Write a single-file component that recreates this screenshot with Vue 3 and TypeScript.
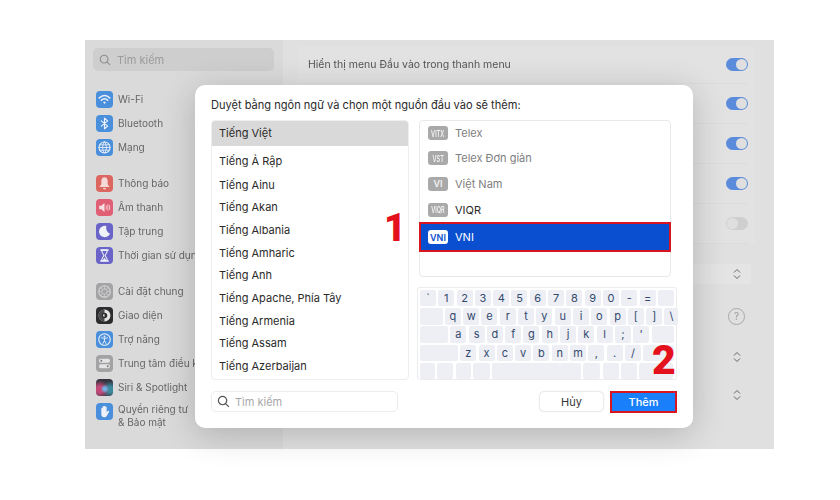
<script setup lang="ts">
interface Glyph { d: string; fill?: boolean; sw?: number; color?: string }
interface NavItem { label: string; bg: string; glyphs: Glyph[]; multi?: boolean }

const wifi: Glyph[] = [
  { d: 'M3 6.6C6 3.6 10 3.6 13 6.6', sw: 1.5 },
  { d: 'M5 8.7C6.8 7 9.2 7 11 8.7', sw: 1.5 },
  { d: 'M8 12.2 6.7 10.6C7.5 10 8.5 10 9.3 10.6Z', fill: true }
]
const navGroups: NavItem[][] = [
  [
    { label: 'Wi-Fi', bg: '#4a8fdc', glyphs: wifi },
    { label: 'Bluetooth', bg: '#4a8fdc', glyphs: [{ d: 'M5 5.5 11 10.5 8 13V3L11 5.5 5 10.5', sw: 1.1 }] },
    { label: 'Mạng', bg: '#4a8fdc', glyphs: [
      { d: 'M8 2.8A5.2 5.2 0 1 0 8 13.2 5.2 5.2 0 1 0 8 2.8Z', sw: 1 },
      { d: 'M8 2.8C5.6 5.6 5.6 10.4 8 13.2 10.4 10.4 10.4 5.6 8 2.8Z', sw: .8 },
      { d: 'M2.8 8H13.2M3.6 5.5H12.4M3.6 10.5H12.4', sw: .8 }
    ] }
  ],
  [
    { label: 'Thông báo', bg: '#dc6660', glyphs: [{ d: 'M8 2.2C5.8 2.2 5 4 5 5.8V8.8L3.2 11.2H12.8L11 8.8V5.8C11 4 10.2 2.2 8 2.2ZM6.5 12.2H9.5C9.2 14 6.8 14 6.5 12.2Z', fill: true, color: '#f4d9d6' }] },
    { label: 'Âm thanh', bg: '#e05f74', glyphs: [
      { d: 'M3 6.3H5L8 3.8V12.2L5 9.7H3Z', fill: true, color: '#f6dfe2' },
      { d: 'M9.6 6.4V9.6M11.2 5.2V10.8M12.8 6.2V9.8', sw: .9, color: '#f2c6cd' }
    ] },
    { label: 'Tập trung', bg: '#6a64c8', glyphs: [{ d: 'M9.8 2.8A5.4 5.4 0 1 0 13.2 10.2 6 6 0 0 1 9.8 2.8Z', fill: true }] },
    { label: 'Thời gian sử dụng', bg: '#6a64c8', glyphs: [
      { d: 'M4.5 2.8H11.5M4.5 13.2H11.5', sw: 1.3 },
      { d: 'M5.4 3.2H10.6C10.6 5.6 8.8 6.8 8.6 8 8.8 9.2 10.6 10.4 10.6 12.8H5.4C5.4 10.4 7.2 9.2 7.4 8 7.2 6.8 5.4 5.6 5.4 3.2Z', sw: 1 },
      { d: 'M6.2 12.6H9.8L8 10.2Z', fill: true }
    ] }
  ],
  [
    { label: 'Cài đặt chung', bg: '#a3a3a5', glyphs: [
      { d: 'M8 2.6A5.4 5.4 0 1 0 8 13.4 5.4 5.4 0 1 0 8 2.6Z', sw: 1.2, color: '#cfcfd0' },
      { d: 'M8 5.4A2.6 2.6 0 1 0 8 10.6 2.6 2.6 0 1 0 8 5.4Z', sw: .9, color: '#cfcfd0' },
      { d: 'M8 2.8V5.4M8 10.6V13.2M2.8 8H5.4M10.6 8H13.2M4.3 4.3 6.2 6.2M9.8 9.8 11.7 11.7M11.7 4.3 9.8 6.2M6.2 9.8 4.3 11.7', sw: .6, color: '#cfcfd0' }
    ] },
    { label: 'Giao diện', bg: '#2c2c2e', glyphs: [
      { d: 'M8 2.4A5.6 5.6 0 1 0 8 13.6 5.6 5.6 0 1 0 8 2.4Z', fill: true, color: '#e4e4e4' },
      { d: 'M8 2.4A5.6 5.6 0 0 0 8 13.6Z', fill: true, color: '#4a4a4c' },
      { d: 'M8 5.4A2.6 2.6 0 1 0 8 10.6 2.6 2.6 0 1 0 8 5.4Z', fill: true, color: '#2c2c2e' },
      { d: 'M8 6.6A1.4 1.4 0 0 0 8 9.4Z', fill: true, color: '#e4e4e4' }
    ] },
    { label: 'Trợ năng', bg: '#4a8fdc', glyphs: [
      { d: 'M8 2.6A5.4 5.4 0 1 0 8 13.4 5.4 5.4 0 1 0 8 2.6Z', sw: 1 },
      { d: 'M5.2 6.4 8 7 10.8 6.4M8 7V9.2L6.6 11.6M8 9.2 9.4 11.6', sw: .9 },
      { d: 'M8 4.3A.9.9 0 1 0 8 6.1 .9.9 0 1 0 8 4.3Z', fill: true }
    ] },
    { label: 'Trung tâm điều khiển', bg: '#a3a3a5', glyphs: [
      { d: 'M4.6 3.6H11.4A1.8 1.8 0 0 1 11.4 7.2H4.6A1.8 1.8 0 0 1 4.6 3.6Z', fill: true, color: '#e4e4e4' },
      { d: 'M4.6 8.8H11.4A1.8 1.8 0 0 1 11.4 12.4H4.6A1.8 1.8 0 0 1 4.6 8.8Z', fill: true, color: '#e4e4e4' },
      { d: 'M5 4.5A.9.9 0 1 0 5 6.3 .9.9 0 1 0 5 4.5ZM11 9.7A.9.9 0 1 0 11 11.5 .9.9 0 1 0 11 9.7Z', fill: true, color: '#77777a' }
    ] },
    { label: 'Siri & Spotlight', bg: 'radial-gradient(circle at 52% 58%, #6fb2e6 0 10%, transparent 32%), radial-gradient(circle at 22% 62%, #c24a78 0 20%, transparent 55%), radial-gradient(circle at 82% 62%, #3c8a9e 0 16%, transparent 50%), #35333f', glyphs: [] },
    { label: 'Quyền riêng tư\n& Bảo mật', bg: '#4a8fdc', multi: true, glyphs: [
      { d: 'M5 8V5.2C5 4.2 6.2 4.2 6.2 5.2V7.4 3.6C6.2 2.6 7.5 2.6 7.5 3.6V7.4 3.3C7.5 2.3 8.8 2.3 8.8 3.3V7.4 4C8.8 3 10 3 10 4V8.8L11 7.6C11.8 6.8 12.7 7.5 12.2 8.4L10.4 11.8C9.8 13 8.8 13.5 7.7 13.5 6 13.5 5 12.2 5 10.6Z', fill: true }
    ] }
  ]
]

interface SourceRow { badge: string; label: string; dim?: boolean; active?: boolean; narrow?: boolean }
const languages = ['Tiếng Ainu', 'Tiếng Akan', 'Tiếng Albania', 'Tiếng Amharic', 'Tiếng Anh', 'Tiếng Apache, Phía Tây', 'Tiếng Armenia', 'Tiếng Assam', 'Tiếng Azerbaijan']
const sources: SourceRow[] = [
  { badge: 'VITX', label: 'Telex', dim: true, narrow: true },
  { badge: 'VST', label: 'Telex Đơn giản', dim: true, narrow: true },
  { badge: 'VI', label: 'Việt Nam', dim: true },
  { badge: 'VIQR', label: 'VIQR', narrow: true },
  { badge: 'VNI', label: 'VNI', active: true }
]

interface Key { t: string; w: number }
const chars = (s: string, w = 16): Key[] => s.split('').map(t => ({ t, w }))
const keyRows: Key[][] = [
  [...chars('`1234567890-='), { t: '', w: 16 }],
  [{ t: '', w: 22.6 }, ...chars('qwertyuiop[]'), { t: '\\', w: 14 }],
  [{ t: '', w: 28 }, ...chars("asdfghjkl;'"), { t: '', w: 22.7 }],
  [{ t: '', w: 38 }, ...chars('zxcvbnm,./'), { t: '', w: 31 }],
  [15, 16, 15, 17, 89, 17, 16, 16, 34].map(w => ({ t: '', w }))
]
const toggles = [true, true, true, true, false]
</script>

<template>
  <main class="page">
    <div class="window">
      <aside class="sidebar">
        <div class="side-search">
          <svg class="lens" viewBox="0 0 14 14"><path d="M6 1.5A4.5 4.5 0 1 0 6 10.5 4.5 4.5 0 1 0 6 1.5ZM9.3 9.3 12.8 12.8" /></svg>
          <span>Tìm kiếm</span>
        </div>
        <nav class="nav">
          <ul v-for="(group, gi) in navGroups" :key="gi" class="nav-group">
            <li v-for="item in group" :key="item.label" class="nav-item" :class="{ multi: item.multi }">
              <span class="nav-icon" :style="{ background: item.bg }">
                <svg viewBox="0 0 16 16">
                  <path
                    v-for="(g, i) in item.glyphs"
                    :key="i"
                    :d="g.d"
                    :fill="g.fill ? (g.color ?? '#eef2f8') : 'none'"
                    :stroke="g.fill ? 'none' : (g.color ?? '#eef2f8')"
                    :stroke-width="g.sw ?? 1"
                    stroke-linecap="round"
                    stroke-linejoin="round"
                  />
                </svg>
              </span>
              <span class="nav-label">{{ item.label }}</span>
            </li>
          </ul>
        </nav>
      </aside>

      <section class="content">
        <div class="toggle-group">
          <div v-for="(on, i) in toggles" :key="i" class="row">
            <span v-if="i === 0" class="row-label">Hiển thị menu Đầu vào trong thanh menu</span>
            <span class="toggle" :class="{ on }"><i /></span>
          </div>
        </div>
        <div class="ctl-row select-row">
          <svg class="updown" viewBox="0 0 8 12"><path d="M1 4.5 4 1.5 7 4.5M1 7.5 4 10.5 7 7.5" /></svg>
        </div>
        <div class="ctl-row help-row"><span class="help">?</span></div>
        <div class="ctl-row chevron-a">
          <svg class="updown" viewBox="0 0 8 12"><path d="M1 4.5 4 1.5 7 4.5M1 7.5 4 10.5 7 7.5" /></svg>
        </div>
        <div class="ctl-row chevron-b">
          <svg class="updown" viewBox="0 0 8 12"><path d="M1 4.5 4 1.5 7 4.5M1 7.5 4 10.5 7 7.5" /></svg>
        </div>
      </section>

      <div class="dialog">
        <h1 class="title">Duyệt bằng ngôn ngữ và chọn một nguồn đầu vào sẽ thêm:</h1>
        <div class="columns">
          <ul class="lang-list">
            <li class="lang selected">Tiếng Việt</li>
            <li class="lang first">Tiếng Ả Rập</li>
            <li v-for="l in languages" :key="l" class="lang">{{ l }}</li>
          </ul>
          <div class="right">
            <ul class="source-list">
              <li v-for="s in sources" :key="s.label" class="source" :class="{ dim: s.dim, active: s.active }">
                <span class="badge" :class="{ narrow: s.narrow }"><b>{{ s.badge }}</b></span>
                <span>{{ s.label }}</span>
              </li>
            </ul>
            <div class="keyboard">
              <div v-for="(row, ri) in keyRows" :key="ri" class="key-row">
                <span v-for="(k, ki) in row" :key="ki" class="key" :style="{ width: k.w + 'px' }">{{ k.t }}</span>
              </div>
            </div>
          </div>
        </div>
        <footer class="footer">
          <div class="dlg-search">
            <svg class="lens dark" viewBox="0 0 14 14"><path d="M6 1.5A4.5 4.5 0 1 0 6 10.5 4.5 4.5 0 1 0 6 1.5ZM9.3 9.3 12.8 12.8" /></svg>
            <span>Tìm kiếm</span>
          </div>
          <div class="buttons">
            <button class="btn cancel" type="button">Hủy</button>
            <button class="btn add" type="button">Thêm</button>
          </div>
        </footer>
        <span class="mark mark-1">1</span>
        <span class="mark mark-2">2</span>
      </div>
    </div>
  </main>
</template>

<style scoped>
.page {
  width: 840px;
  height: 500px;
  box-sizing: border-box;
  padding: 40px 66px 51px 85px;
  background: #fff;
  font-family: Inter, "Noto Sans", sans-serif;
  overflow: hidden;
}
.window {
  position: relative;
  display: flex;
  height: 409px;
  background: #dedede;
}
ul { list-style: none; margin: 0; padding: 0; }

.sidebar {
  width: 198px;
  flex: none;
  box-sizing: border-box;
  padding: 8px 9px 0 8px;
  background: #dbdadb;
  filter: blur(.35px);
}
.side-search {
  display: flex;
  align-items: center;
  gap: 6px;
  height: 23px;
  padding-left: 6px;
  border-radius: 5px;
  background: #cfcecf;
  color: #9c9c9c;
  font-size: 11px;
}
.lens { width: 12px; height: 12px; flex: none; fill: none; stroke: #8f8f8f; stroke-width: 1.3; }
.lens.dark { stroke: #555; width: 13px; height: 13px; }
.nav { margin-top: 16px; padding-left: 3px; display: flex; flex-direction: column; gap: 12px; }
.nav-item {
  display: flex;
  align-items: center;
  gap: 5px;
  height: 24px;
  color: #666;
  font-size: 10px;
  white-space: pre;
}
.nav-item.multi { align-items: flex-start; height: 38px; padding-top: 4px; box-sizing: border-box; line-height: 13px; }
.nav-icon { width: 17px; height: 17px; border-radius: 4px; flex: none; display: block; }
.nav-icon svg { width: 17px; height: 17px; display: block; }

.content {
  flex: 1;
  box-sizing: border-box;
  padding: 6px 26px 0 15px;
  background: #e0e0e0;
  filter: blur(.35px);
}
.toggle-group { background: #e2e2e2; margin-right: -7px; padding-right: 7px; }
.row {
  display: flex;
  align-items: center;
  height: 40px;
  padding-left: 10px;
  border-bottom: 1px solid #dcdcdc;
  box-sizing: border-box;
}
.row:first-child { height: 38px; }
.row-label { color: #555; font-size: 10.5px; }
.toggle {
  margin-left: auto;
  position: relative;
  width: 22px;
  height: 13px;
  border-radius: 7px;
  background: #cfcfcf;
}
.toggle.on { background: #5a8cdb; }
.toggle i {
  position: absolute;
  top: 1px;
  left: 1px;
  width: 11px;
  height: 11px;
  border-radius: 50%;
  background: #dfdfdf;
}
.toggle.on i { left: 10px; }
.ctl-row { display: flex; align-items: center; justify-content: flex-end; height: 20px; padding-right: 7px; }
.select-row { margin-top: 20px; background: #e4e4e4; margin-right: -3px; padding-right: 10px; }
.help-row { margin-top: 22px; padding-right: 3px; }
.chevron-a { margin-top: 21px; }
.chevron-b { margin-top: 18px; }
.updown { width: 8px; height: 12px; fill: none; stroke: #666; stroke-width: 1; }
.help {
  width: 15px;
  height: 15px;
  border: 1px solid #a8a8a8;
  border-radius: 50%;
  color: #999;
  font-size: 10px;
  display: flex;
  align-items: center;
  justify-content: center;
}

.dialog {
  position: absolute;
  left: 110px;
  top: 45px;
  width: 498px;
  height: 343px;
  box-sizing: border-box;
  padding: 12px 16px 0;
  background: #fff;
  border-radius: 10px;
  box-shadow: 0 6px 34px rgba(0, 0, 0, .2);
  color: #2a2a2a;
}
.title { margin: 0; height: 16px; font-size: 11.07px; line-height: 16px; font-weight: 400; white-space: nowrap; }
.columns { display: flex; gap: 8px; margin-top: 7px; }
.lang-list {
  width: 198px;
  height: 260px;
  box-sizing: border-box;
  border: 1px solid #eeeeee;
  border-radius: 4px;
  overflow: hidden;
  flex: none;
}
.lang {
  height: 22.7px;
  line-height: 22.7px;
  padding-left: 7px;
  font-size: 11px;
  white-space: nowrap;
}
.lang.selected { height: 25px; line-height: 25px; background: #d9d9d9; }
.lang.first { height: 25px; line-height: 24px; margin-top: 2.5px; }
.right { width: 260px; flex: none; display: flex; flex-direction: column; gap: 10px; }
.source-list {
  width: 252px;
  height: 157px;
  margin-left: 2px;
  box-sizing: border-box;
  border: 1px solid #e9e9e9;
  border-radius: 4px;
}
.source {
  display: flex;
  align-items: center;
  gap: 7px;
  height: 25.6px;
  padding-left: 8px;
  font-size: 11px;
  box-sizing: border-box;
}
.source:first-child { height: 24.6px; }
.source.dim { color: #7e7e7e; }
.source.active {
  height: 29.6px;
  margin: 0 -1px;
  padding-left: 7px;
  border: 2.5px solid #d8161f;
  background: #0a4fd0;
  color: #fff;
}
.badge {
  width: 20px;
  height: 14px;
  border-radius: 3px;
  background: #a9a9a9;
  color: #f2f2f2;
  font-size: 9px;
  display: flex;
  align-items: center;
  justify-content: center;
  flex: none;
}
.badge b { font-weight: 600; white-space: nowrap; display: block; }
.badge.narrow b { font-size: 9px; transform: scaleX(.62); }
.active .badge { background: #fff; color: #0a4fd0; }
.keyboard {
  height: 93px;
  box-sizing: border-box;
  padding: 2px 2px;
  border: 1px solid #ececec;
  border-radius: 3px;
  display: flex;
  flex-direction: column;
  gap: 1.8px;
}
.key-row { display: flex; gap: 2.3px; }
.key {
  height: 16.4px;
  border-radius: 2px;
  background: #edeff4;
  color: #33496e;
  font-size: 11px;
  line-height: 16px;
  text-align: center;
  flex: none;
}
.footer { display: flex; justify-content: space-between; align-items: center; margin-top: 10px; height: 23px; }
.dlg-search {
  display: flex;
  align-items: center;
  gap: 5px;
  width: 187px;
  height: 21px;
  box-sizing: border-box;
  padding-left: 5px;
  border: 1px solid #ececec;
  border-radius: 5px;
  color: #a8a8a8;
  font-size: 11px;
}
.buttons { display: flex; align-items: center; gap: 7px; }
.btn {
  font-family: inherit;
  font-size: 11px;
  padding: 0;
  height: 19px;
  border-radius: 4px;
  border: 0;
}
.cancel { width: 63px; background: #fff; color: #333; box-shadow: 0 0 2px rgba(0, 0, 0, .3); }
.add {
  width: 67px;
  height: 22px;
  box-sizing: border-box;
  background: #1a7ffb;
  border: 2px solid #d8161f;
  border-radius: 0;
  color: #fff;
  font-weight: 500;
}
.mark {
  position: absolute;
  color: #e4101b;
  font-family: Roboto, "Liberation Sans", sans-serif;
  font-weight: 900;
  line-height: 1;
  font-size: 38px;
}
.mark-1 { left: 189px; top: 124px; }
.mark-2 { left: 457px; top: 255px; font-size: 41px; }
</style>
